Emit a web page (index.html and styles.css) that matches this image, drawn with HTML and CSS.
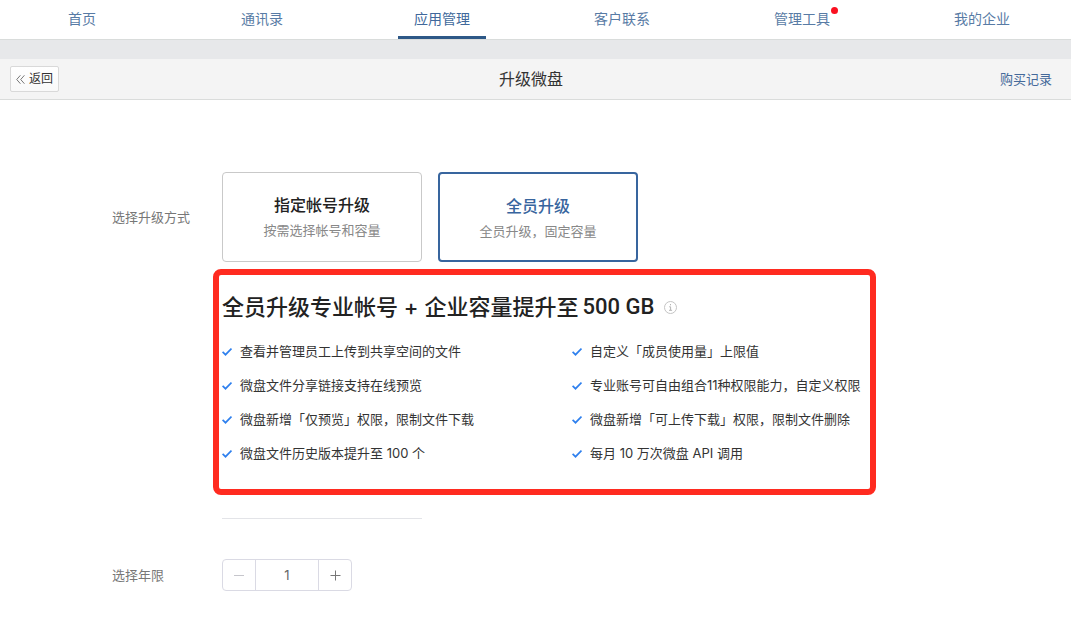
FILE: index.html
```html
<!DOCTYPE html>
<html lang="zh-CN">
<head>
<meta charset="utf-8">
<meta name="viewport" content="width=device-width, initial-scale=1">
<title>升级微盘</title>
<link rel="stylesheet" href="styles.css">
</head>
<body>
<svg class="sprite" aria-hidden="true">
  <symbol id="check" viewBox="0 0 10 10"><path d="M0.6 5.9 3.5 8.7 9.5 2.5" fill="none" stroke="#2f80ee" stroke-width="1.7"/></symbol>
</svg>
<nav class="nav">
  <a class="nav-item" href="#">首页</a>
  <a class="nav-item" href="#">通讯录</a>
  <a class="nav-item nav-item-active" href="#" aria-current="page">应用管理</a>
  <a class="nav-item" href="#">客户联系</a>
  <a class="nav-item" href="#">管理工具<span class="nav-dot"></span></a>
  <a class="nav-item" href="#">我的企业</a>
</nav>
<header class="bar">
  <div class="bar-side">
    <button class="back" type="button">
      <svg width="9" height="9" viewBox="0 0 9 9" aria-hidden="true"><path d="M4.4 0.3.7 4.5l3.7 4.2M8.4 0.3 4.7 4.5l3.7 4.2" fill="none" stroke="#777"/></svg>
      返回
    </button>
  </div>
  <h1 class="bar-title">升级微盘</h1>
  <div class="bar-side bar-side-end"><a class="bar-link" href="#">购买记录</a></div>
</header>
<main class="form">
  <section class="row">
    <span class="label label-mode" id="mode">选择升级方式</span>
    <div class="field">
      <div class="cards" role="group" aria-labelledby="mode">
        <button class="card" type="button" aria-pressed="false">
          <span class="card-title">指定帐号升级</span>
          <span class="card-note">按需选择帐号和容量</span>
        </button>
        <button class="card card-active" type="button" aria-pressed="true">
          <span class="card-title">全员升级</span>
          <span class="card-note">全员升级，固定容量</span>
        </button>
      </div>
      <div class="panel">
        <h2 class="panel-title">全员升级专业帐号 + 企业容量提升至<span class="amount">500 GB</span>
          <svg class="info" width="13" height="13" viewBox="0 0 13 13" role="img" aria-label="说明"><circle cx="6.5" cy="6.5" r="6" fill="none" stroke="#c4c4c4"/><path d="M6.5 3v1.3M5.2 5.8h1.4v3.4M5 9.3h3.1" fill="none" stroke="#b4b4b4"/></svg>
        </h2>
        <ul class="features">
          <li><svg class="check"><use href="#check"/></svg>查看并管理员工上传到共享空间的文件</li>
          <li><svg class="check"><use href="#check"/></svg>自定义「成员使用量」上限值</li>
          <li><svg class="check"><use href="#check"/></svg>微盘文件分享链接支持在线预览</li>
          <li><svg class="check"><use href="#check"/></svg>专业账号可自由组合11种权限能力，自定义权限</li>
          <li><svg class="check"><use href="#check"/></svg>微盘新增「仅预览」权限，限制文件下载</li>
          <li><svg class="check"><use href="#check"/></svg>微盘新增「可上传下载」权限，限制文件删除</li>
          <li><svg class="check"><use href="#check"/></svg>微盘文件历史版本提升至 100 个</li>
          <li><svg class="check"><use href="#check"/></svg>每月 10 万次微盘 API 调用</li>
        </ul>
      </div>
      <hr class="divider">
    </div>
  </section>
  <section class="row row-years">
    <label class="label" for="years">选择年限</label>
    <div class="stepper">
      <button class="step" type="button" aria-label="减少" disabled><svg width="11" height="11" viewBox="0 0 11 11"><path d="M0 5.5h10" stroke="#c6c6cc"/></svg></button>
      <input class="count" id="years" type="text" inputmode="numeric" value="1">
      <button class="step" type="button" aria-label="增加"><svg width="11" height="11" viewBox="0 0 11 11"><path d="M0.5 5.5h10M5.5 0.5v10" stroke="#777"/></svg></button>
    </div>
  </section>
</main>
</body>
</html>
```

FILE: styles.css
```css
* { box-sizing: border-box; }

body {
  margin: 0;
  background: #fff;
  color: #333;
  font: 13px/20px Inter, "Noto Sans CJK SC", sans-serif;
  overflow-x: hidden;
}

button, input { font: inherit; color: inherit; margin: 0; }
a { text-decoration: none; }
.sprite { display: none; }

.nav {
  display: grid;
  grid-template-columns: repeat(6, 1fr);
  justify-items: center;
  margin: 0 -1px 0 -8px;
  border-bottom: 1px solid #d9dcdb;
}
.nav-item {
  position: relative;
  height: 39px;
  padding: 0 16px;
  color: #587ba5;
  font-size: 14px;
  line-height: 38px;
}
.nav-item-active { color: #40689b; border-bottom: 3px solid #2d5887; }
.nav-dot {
  position: absolute;
  top: 7px;
  right: 8px;
  width: 7px;
  height: 7px;
  border-radius: 50%;
  background: #fa1020;
}

.bar {
  display: flex;
  align-items: center;
  height: 60px;
  padding: 0 19px 0 10px;
  border-top: 19px solid #e7e8ea;
  border-bottom: 1px solid #dadcdb;
  background: #f4f4f4;
}
.bar-side { flex: 1; display: flex; }
.bar-side-end { justify-content: flex-end; }
.bar-title { margin: 0; font-size: 16px; font-weight: 400; line-height: 24px; }
.bar-link { color: #44699a; }
.back {
  display: flex;
  align-items: center;
  gap: 4px;
  height: 26px;
  padding: 0 5px;
  border: 1px solid #d9d9d9;
  border-radius: 2px;
  background: linear-gradient(#fff, #f9f9f9);
  font-size: 12px;
}

.form { padding: 72px 112px 28px; }
.row { display: flex; }
.row-years { align-items: center; margin-top: 40px; }
.label { flex: 0 0 110px; color: #777; }
.label-mode { padding-top: 35px; }
.field { flex: 1; min-width: 0; }

.cards { display: flex; gap: 16px; }
.card {
  display: flex;
  flex-direction: column;
  align-items: center;
  justify-content: flex-start;
  width: 200px;
  height: 90px;
  padding: 20px 8px 0;
  border: 1px solid #c9c9c9;
  border-radius: 4px;
  background: #fff;
}
.card-active { border: 2px solid #38659e; }
.card-title { color: #222; font-size: 16px; font-weight: 500; line-height: 24px; }
.card-active .card-title { color: #38659e; }
.card-note { color: #888; line-height: 26px; }

.panel {
  max-width: 663px;
  margin: 7px 0 0 -9px;
  padding: 16px 3px 19px;
  border: 6px solid #ff2b20;
  border-radius: 8px;
}
.panel-title {
  display: flex;
  align-items: center;
  margin: 0 0 11px;
  color: #222;
  font-size: 22px;
  font-weight: 500;
  line-height: 32px;
}
.amount { margin-left: 4px; font-family: Roboto, sans-serif; }
.info { margin-left: 10px; }
.features {
  display: grid;
  grid-template-columns: 350px auto;
  margin: 0;
  padding: 0;
  list-style: none;
  line-height: 34px;
  white-space: nowrap;
}
.features li { display: flex; align-items: center; gap: 8px; }
.check { width: 10px; height: 10px; }

.divider { width: 200px; height: 1px; margin: 23px 0 0; border: 0; background: #e3e4e8; }

.stepper {
  display: flex;
  width: 130px;
  height: 32px;
  border: 1px solid #dadae4;
  border-radius: 4px;
}
.step {
  display: flex;
  flex: 0 0 32px;
  align-items: center;
  justify-content: center;
  padding: 0;
  border: 0;
  background: none;
}
.count {
  flex: 1;
  min-width: 0;
  padding: 0;
  border: solid #dadae4;
  border-width: 0 1px;
  background: none;
  color: #666;
  text-align: center;
}
```
